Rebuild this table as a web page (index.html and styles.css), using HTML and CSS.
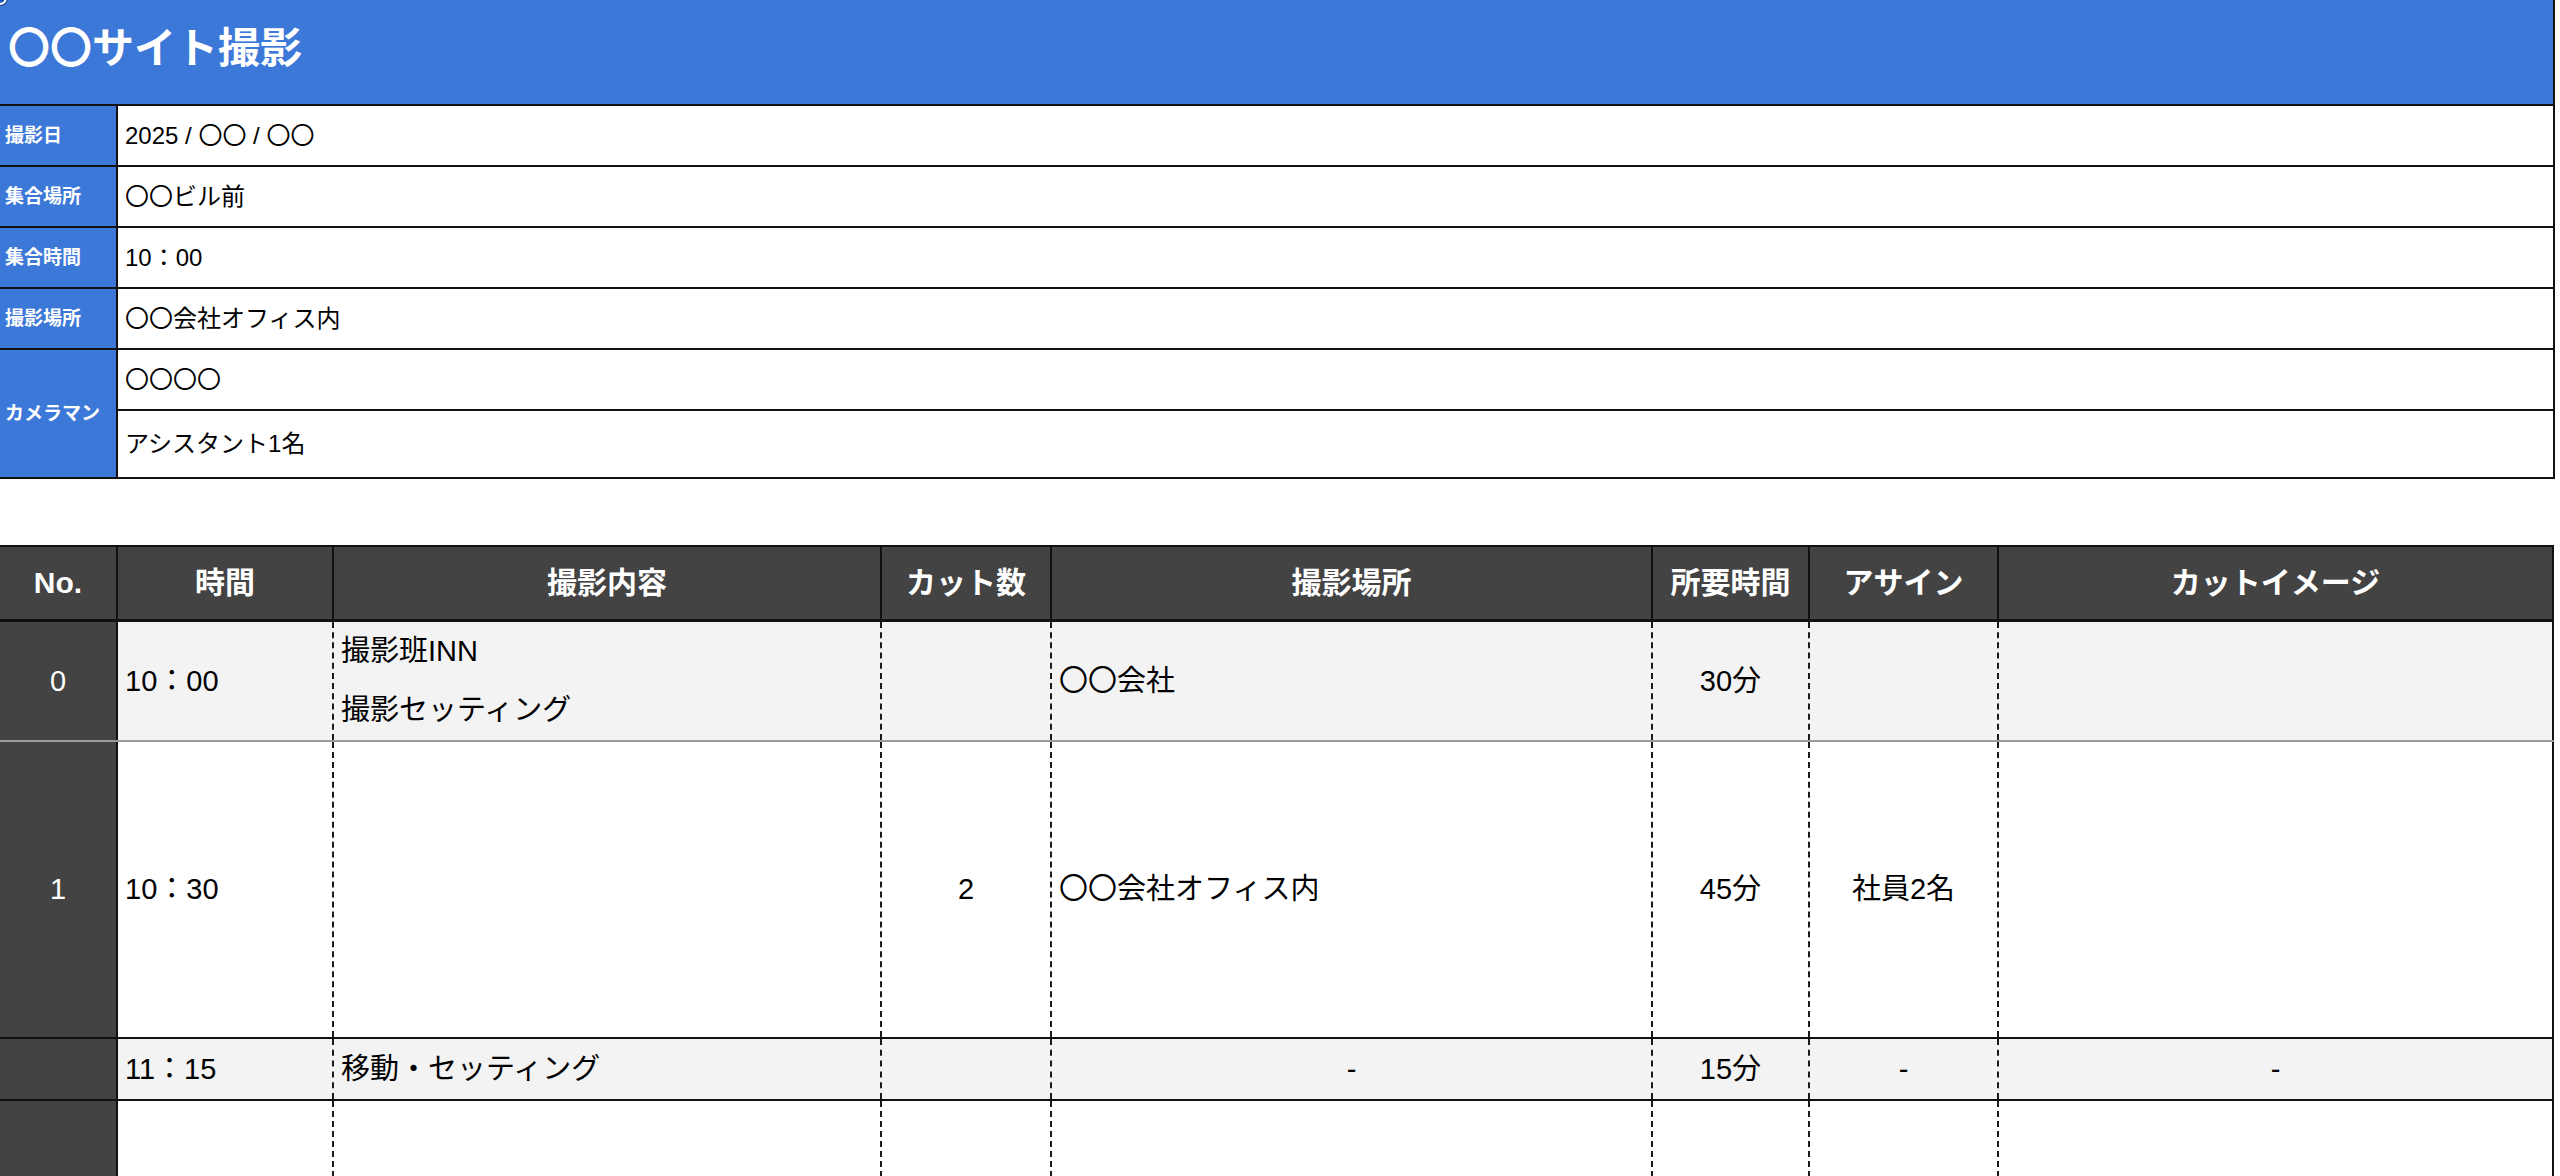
FILE: index.html
```html
<!DOCTYPE html>
<html lang="ja">
<head>
<meta charset="utf-8">
<title>〇〇サイト撮影</title>
<link rel="stylesheet" href="styles.css">
</head>
<body>
<div class="sheet">
  <span class="handle"></span>
  <table class="info">
    <colgroup><col class="c-label"><col class="c-value"></colgroup>
    <tr class="r-title"><td colspan="2" class="title">〇〇サイト撮影</td></tr>
    <tr class="r-info"><th class="label">撮影日</th><td class="value">2025 / 〇〇 / 〇〇</td></tr>
    <tr class="r-info"><th class="label">集合場所</th><td class="value">〇〇ビル前</td></tr>
    <tr class="r-info"><th class="label">集合時間</th><td class="value">10：00</td></tr>
    <tr class="r-info"><th class="label">撮影場所</th><td class="value">〇〇会社オフィス内</td></tr>
    <tr class="r-info"><th class="label" rowspan="2">カメラマン</th><td class="value">〇〇〇〇</td></tr>
    <tr class="r-info-tall"><td class="value">アシスタント1名</td></tr>
  </table>

  <table class="schedule">
    <colgroup>
      <col class="w-no"><col class="w-time"><col class="w-content"><col class="w-cuts">
      <col class="w-place"><col class="w-dur"><col class="w-assign"><col class="w-image">
    </colgroup>
    <thead>
      <tr class="r-head">
        <th>No.</th><th>時間</th><th>撮影内容</th><th>カット数</th>
        <th>撮影場所</th><th>所要時間</th><th>アサイン</th><th>カットイメージ</th>
      </tr>
    </thead>
    <tbody>
      <tr class="r0 shade">
        <td class="no">0</td>
        <td class="first">10：00</td>
        <td class="multi">撮影班INN<br>撮影セッティング</td>
        <td class="center"></td>
        <td>〇〇会社</td>
        <td class="center">30分</td>
        <td class="center"></td>
        <td class="center"></td>
      </tr>
      <tr class="r1">
        <td class="no">1</td>
        <td class="first">10：30</td>
        <td></td>
        <td class="center">2</td>
        <td>〇〇会社オフィス内</td>
        <td class="center">45分</td>
        <td class="center">社員2名</td>
        <td class="center"></td>
      </tr>
      <tr class="r2 shade">
        <td class="no"></td>
        <td class="first">11：15</td>
        <td>移動・セッティング</td>
        <td class="center"></td>
        <td class="center">-</td>
        <td class="center">15分</td>
        <td class="center">-</td>
        <td class="center">-</td>
      </tr>
      <tr class="r3">
        <td class="no"></td>
        <td class="first"></td>
        <td></td>
        <td class="center"></td>
        <td></td>
        <td class="center"></td>
        <td class="center"></td>
        <td class="center"></td>
      </tr>
    </tbody>
  </table>
</div>
</body>
</html>
```

FILE: styles.css
```css
* { box-sizing: border-box; }

html, body {
  margin: 0;
  padding: 0;
  background: #ffffff;
}

body {
  font-family: "Liberation Sans", "Noto Sans CJK JP", sans-serif;
  color: #000000;
}

.sheet {
  position: relative;
  width: 2554px;
}

.handle {
  position: absolute;
  left: -7px;
  top: -9px;
  width: 14px;
  height: 14px;
  border-radius: 50%;
  background: #1a56c8;
  border: 2px solid #ffffff;
  box-shadow: 0 0 0 1px #1a3f8a;
  z-index: 2;
}

/* ---------- info table ---------- */
.info {
  width: 2554px;
  border-collapse: collapse;
  table-layout: fixed;
}

.info .c-label { width: 117px; }
.info .c-value { width: 2437px; }

.r-title { height: 105px; }
.r-info { height: 61px; }
.r-info-tall { height: 68px; }

.title {
  background: #3c78d8;
  color: #ffffff;
  font-weight: bold;
  font-size: 42px;
  line-height: 50px;
  padding: 0 0 6px 8px;
  border: none;
  border-right: 2px solid #111111;
  vertical-align: middle;
}

.label {
  background: #3c78d8;
  color: #ffffff;
  font-weight: bold;
  font-size: 19px;
  line-height: 24px;
  text-align: left;
  padding: 0 0 0 5px;
  border-top: 2px solid #111111;
  border-bottom: 2px solid #111111;
  border-right: 2px solid #111111;
  vertical-align: middle;
  white-space: nowrap;
}

.value {
  font-size: 24px;
  line-height: 30px;
  padding: 0 0 0 7px;
  border: 2px solid #111111;
  vertical-align: middle;
  white-space: nowrap;
}

/* ---------- schedule table ---------- */
.schedule {
  margin-top: 66px;
  width: 2554px;
  border-collapse: collapse;
  table-layout: fixed;
}

.w-no { width: 117px; }
.w-time { width: 216px; }
.w-content { width: 548px; }
.w-cuts { width: 170px; }
.w-place { width: 601px; }
.w-dur { width: 157px; }
.w-assign { width: 189px; }
.w-image { width: 555px; }

.r-head { height: 74px; }

.r-head th {
  background: #434343;
  color: #ffffff;
  font-weight: bold;
  font-size: 30px;
  line-height: 36px;
  text-align: center;
  vertical-align: middle;
  padding: 0;
  border: 2px solid #111111;
  border-bottom: 3px solid #111111;
  white-space: nowrap;
}

.r-head th:first-child { border-left: none; }

.schedule td {
  font-size: 29px;
  line-height: 34px;
  padding: 0 0 0 7px;
  vertical-align: middle;
  white-space: nowrap;
  border-left: 2px dashed #1a1a1a;
  border-right: 2px dashed #1a1a1a;
  border-top: 2px solid #111111;
  border-bottom: 2px solid #111111;
}

.schedule td:last-child { border-right: 2px solid #111111; }

.schedule td.no {
  background: #434343;
  color: #ffffff;
  text-align: center;
  padding: 0;
  border-left: none;
  border-right: 2px solid #111111;
}

.schedule td.first { border-left: 2px solid #111111; }

.schedule td.center {
  text-align: center;
  padding: 0;
}

.schedule td.multi {
  line-height: 59px;
}

.shade td { background: #f3f3f3; }
.shade td.no { background: #434343; }

.r0 { height: 118px; }
.r0 td { border-bottom: 2px solid #9a9a9a; }
.r1 { height: 297px; }
.r2 { height: 62px; }
.r3 { height: 298px; }
```
